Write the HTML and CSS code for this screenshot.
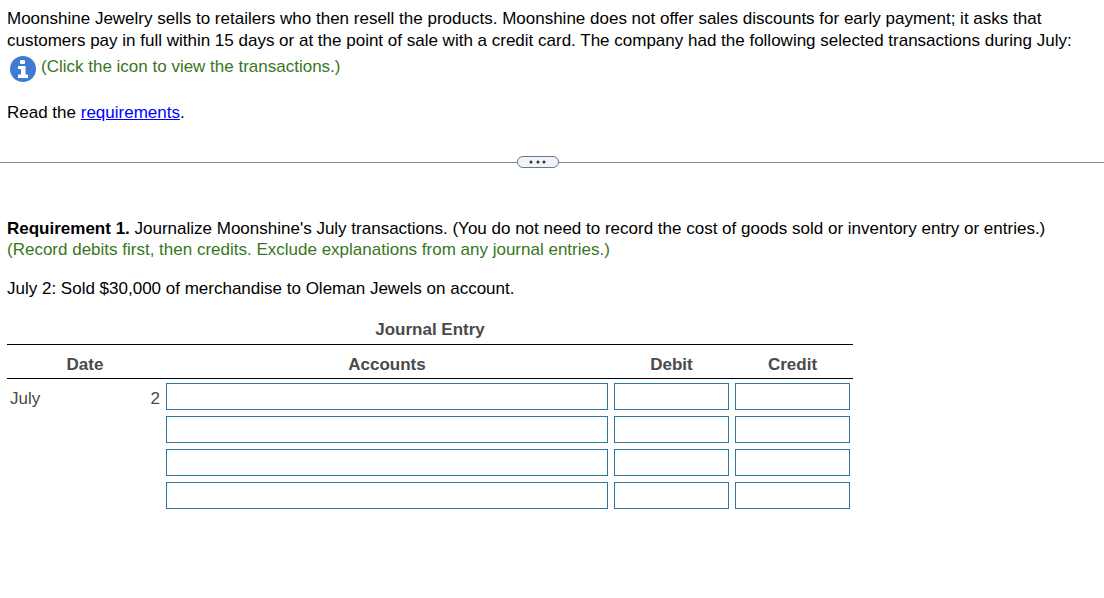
FILE: index.html
```html
<!DOCTYPE html>
<html lang="en">
<head>
    <meta charset="UTF-8">
    <meta name="viewport" content="width=device-width, initial-scale=1.0">
    <title>Moonshine Jewelry - Journal Entry</title>
    <link rel="stylesheet" href="styles.css">
</head>
<body>
    <!-- Problem statement -->
    <section class="problem">
        <p>Moonshine Jewelry sells to retailers who then resell the products. Moonshine does not offer sales discounts for early payment; it asks that customers pay in full within 15 days or at the point of sale with a credit card. The company had the following selected transactions during July:</p>
        <div class="info-row">
            <button type="button" class="info-button" aria-label="View the transactions">
                <svg width="26" height="26" viewBox="0 0 26 26">
                    <circle cx="13" cy="13" r="13" fill="#3f7ad3"/>
                    <rect x="10" y="4" width="5" height="4" rx="1" fill="#fff"/>
                    <path d="M8 10h7.500v8.500H18V22H8v-3.500h3v-5.500H8z" fill="#fff"/>
                </svg>
            </button>
            <span class="hint">(Click the icon to view the transactions.)</span>
        </div>
        <p>Read the <a href="#requirements">requirements</a>.</p>
    </section>

    <!-- Divider -->
    <div class="divider">
        <button type="button" class="divider-handle" aria-label="Resize panels">
            <svg width="18" height="4" viewBox="0 0 18 4" fill="#333">
                <circle cx="2" cy="2" r="1.500"/>
                <circle cx="9" cy="2" r="1.500"/>
                <circle cx="15" cy="2" r="1.500"/>
            </svg>
        </button>
    </div>

    <!-- Answer area -->
    <main class="answer">
        <p id="requirements"><strong>Requirement 1.</strong> Journalize Moonshine's July transactions. (You do not need to record the cost of goods sold or inventory entry or entries.) <span class="hint">(Record debits first, then credits. Exclude explanations from any journal entries.)</span></p>
        <p class="transaction">July 2: Sold $30,000 of merchandise to Oleman Jewels on account.</p>

        <table class="journal">
            <caption>Journal Entry</caption>
            <colgroup>
                <col class="col-month">
                <col class="col-day">
                <col class="col-accounts">
                <col class="col-amount">
                <col class="col-amount">
            </colgroup>
            <thead>
                <tr>
                    <th colspan="2" scope="col">Date</th>
                    <th scope="col">Accounts</th>
                    <th scope="col">Debit</th>
                    <th scope="col">Credit</th>
                </tr>
            </thead>
            <tbody>
                <tr>
                    <td class="date">July</td>
                    <td class="date day">2</td>
                    <td><input type="text" aria-label="Account, line 1"></td>
                    <td><input type="text" aria-label="Debit, line 1"></td>
                    <td><input type="text" aria-label="Credit, line 1"></td>
                </tr>
                <tr>
                    <td></td>
                    <td></td>
                    <td><input type="text" aria-label="Account, line 2"></td>
                    <td><input type="text" aria-label="Debit, line 2"></td>
                    <td><input type="text" aria-label="Credit, line 2"></td>
                </tr>
                <tr>
                    <td></td>
                    <td></td>
                    <td><input type="text" aria-label="Account, line 3"></td>
                    <td><input type="text" aria-label="Debit, line 3"></td>
                    <td><input type="text" aria-label="Credit, line 3"></td>
                </tr>
                <tr>
                    <td></td>
                    <td></td>
                    <td><input type="text" aria-label="Account, line 4"></td>
                    <td><input type="text" aria-label="Debit, line 4"></td>
                    <td><input type="text" aria-label="Credit, line 4"></td>
                </tr>
            </tbody>
        </table>
    </main>
</body>
</html>
```
FILE: styles.css
```css
:root {
    --text: #000;
    --text-table: #4a4a4a;
    --hint: #38761d;
    --link: #0000ff;
    --input-border: #31789a;
    --divider: #7b8794;
}

* {
    box-sizing: border-box;
    margin: 0;
    padding: 0;
}

body {
    font-family: "Liberation Sans", Arial, sans-serif;
    font-size: 17px;
    line-height: 22px;
    color: var(--text);
    background-color: #fff;
}

.problem {
    padding: 8px 7px 0;
}

.info-row {
    display: flex;
    align-items: flex-start;
    gap: 5px;
    padding: 4px 3px 20px;
}

.info-button {
    display: block;
    height: 26px;
    border: none;
    background: none;
    cursor: pointer;
}

.info-button svg {
    display: block;
}

.hint {
    color: var(--hint);
}

a {
    color: var(--link);
}

.divider {
    display: flex;
    align-items: center;
    margin-top: 32px;
}

.divider::before,
.divider::after {
    content: "";
    flex: 1 1 0;
    height: 1px;
    background-color: var(--divider);
}

.divider::after {
    flex-basis: 28px;
}

.divider-handle {
    display: flex;
    align-items: center;
    justify-content: center;
    width: 42px;
    height: 12px;
    border: 1px solid #66788a;
    border-radius: 6px;
    background-color: #f1f4f7;
    cursor: pointer;
}

.answer {
    padding: 50px 7px 0;
    line-height: 21px;
}

.transaction {
    margin-top: 18px;
}

.journal {
    width: 100%;
    max-width: 846px;
    margin-top: 20px;
    border-spacing: 0;
    table-layout: fixed;
    color: var(--text-table);
}

.journal caption {
    padding-bottom: 4px;
    font-weight: bold;
}

.col-month {
    width: 100px;
}

.col-day {
    width: 56px;
}

.col-amount {
    width: 121px;
}

.journal th {
    height: 35px;
    padding-top: 6px;
    border-top: 1px solid #000;
    border-bottom: 1px solid #000;
}

.journal td {
    padding: 4px 3px 2px;
}

.journal .date {
    padding-top: 8px;
}

.journal .day {
    text-align: right;
}

.journal input {
    display: block;
    width: 100%;
    height: 27px;
    padding: 0 4px;
    border: 1px solid var(--input-border);
    font: inherit;
    color: inherit;
}
```
